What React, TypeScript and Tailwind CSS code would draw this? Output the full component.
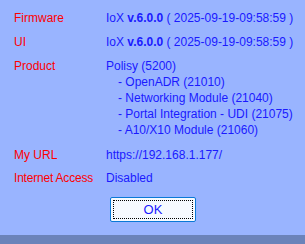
export default function App() {
  const rows = [
    { label: "Firmware", value: <Version /> },
    { label: "UI", value: <Version /> },
  ];
  const modules = [
    "OpenADR (21010)",
    "Networking Module (21040)",
    "Portal Integration - UDI (21075)",
    "A10/X10 Module (21060)",
  ];
  return (
    <div className="w-[305px] h-[244px] bg-[#99b4ff] flex flex-col text-[12px] leading-[16px] font-['Liberation_Sans',sans-serif]">
      <div className="flex-1 flex flex-col pl-[14px] pt-[10px]">
        {rows.map((r) => (
          <div key={r.label} className="flex h-[24px]">
            <div className="w-[92px] text-[#ff0000]">{r.label}</div>
            <div className="text-[#1a1aff]">{r.value}</div>
          </div>
        ))}
        <div className="flex">
          <div className="w-[92px] text-[#ff0000]">Product</div>
          <div className="text-[#1a1aff] flex flex-col">
            <div>Polisy (5200)</div>
            {modules.map((m) => (
              <div key={m} className="pl-[12px]">- {m}</div>
            ))}
          </div>
        </div>
        <div className="flex mt-[9px] h-[23px]">
          <div className="w-[92px] text-[#ff0000]">My URL</div>
          <div className="text-[#1a1aff]">https://192.168.1.177/</div>
        </div>
        <div className="flex">
          <div className="w-[92px] text-[#ff0000] tracking-[-0.2px]">Internet Access</div>
          <div className="text-[#1a1aff]">Disabled</div>
        </div>
        <div className="flex mt-[11px] pl-[96px]">
          <button className="w-[86px] h-[25px] bg-[#f5f9ff] border border-[#0a78d7] rounded-[2px] p-[2px]">
            <div className="w-full h-full border border-dotted border-black flex items-center justify-center text-[#1a1aff] text-[13px]">
              OK
            </div>
          </button>
        </div>
      </div>
      <div className="h-[9px] bg-[#6b83ba]" />
    </div>
  );
}

function Version() {
  return (
    <span>
      IoX <b>v.6.0.0</b> ( 2025-09-19-09:58:59 )
    </span>
  );
}
